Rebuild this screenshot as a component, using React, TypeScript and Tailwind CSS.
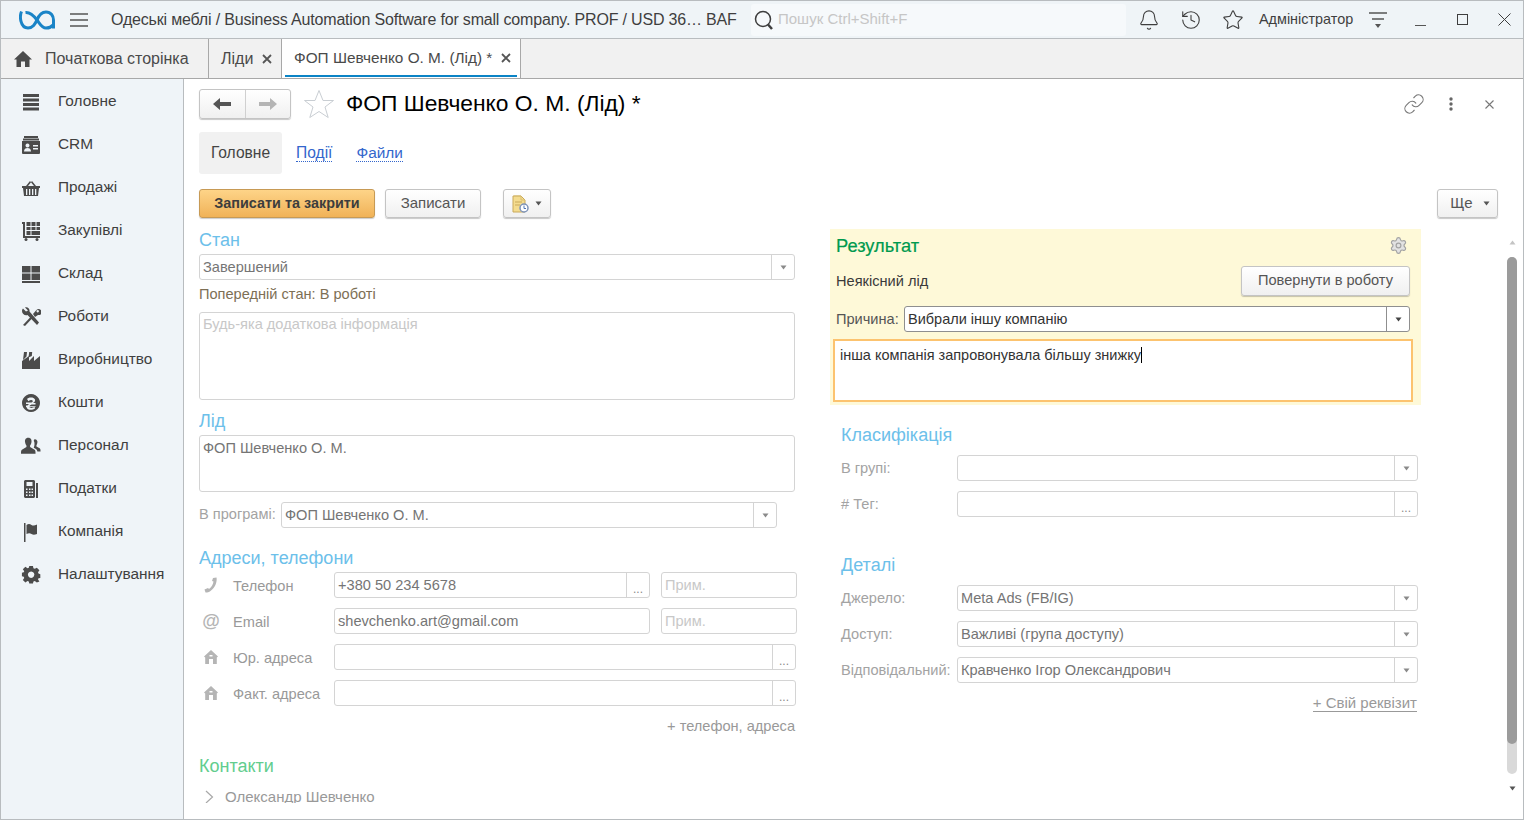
import React from "react";
import { Bell, History, Star, Link as LinkIcon, Settings } from "lucide-react";

const Caret = ({ c = "#8a8a8a" }: { c?: string }) => (
  <svg width="7" height="5" viewBox="0 0 7 5"><path d="M0.5 0.5h6L3.5 4.5z" fill={c} /></svg>
);

const Field = ({ w, h = "h-[26px]", value, btn, dark, ph, lead = "leading-[24px]" }: { w: string; h?: string; value?: string; btn?: "caret" | "dots"; dark?: boolean; ph?: boolean; lead?: string }) => (
  <div className={`${w} ${h} flex shrink-0 bg-white rounded-[3px] border ${dark ? "border-[#8f8f8f]" : "border-[#d4d4d4]"}`}>
    <div className={`flex-1 min-w-0 px-[3px] ${lead} truncate ${ph ? "text-[#c8c8c8]" : dark ? "text-[#333333] text-[14.5px]" : "text-[#757575]"}`}>{value}</div>
    {btn && (
      <div className={`w-[23px] flex shrink-0 border-l ${dark ? "border-[#8f8f8f]" : "border-[#d4d4d4]"} justify-center ${btn === "caret" ? "items-center" : "items-end pb-[1px]"}`}>
        {btn === "caret" ? <Caret c={dark ? "#444444" : "#8a8a8a"} /> : <span className="text-[#8a8a8a] text-[12px] leading-[14px]">...</span>}
      </div>
    )}
  </div>
);

const Heading = ({ children, className = "" }: { children: React.ReactNode; className?: string }) => (
  <div className={`h-[22px] leading-[22px] text-[18px] text-[#6cc0ea] ${className}`}>{children}</div>
);

const I = ({ children, vb = "0 0 20 20" }: { children: React.ReactNode; vb?: string }) => (
  <svg width="20" height="20" viewBox={vb} fill="#4b4b4b">{children}</svg>
);

const navItems: [string, React.ReactNode][] = [
  ["Головне", <I><path d="M2 2h16v3H2zM2 6.500h16v3H2zM2 11h16v3H2zM2 15.500h16v3H2z" /></I>],
  ["CRM", <I><path d="M3 1h14v2H3zM2 3.500h16v2H2z" /><path fillRule="evenodd" d="M1 6h18v12a1 1 0 0 1-1 1H2a1 1 0 0 1-1-1zM6.500 8.500a2 2 0 1 0 .01 0zM3 16.500h7c0-2.500-1.500-3.500-3.500-3.500S3 14 3 16.500zM12 10v1.500h5V10zM12 13v1.500h5V13z" /></I>],
  ["Продажі", <I><path d="M5 8 9 3h2L7 8zM15 8l-4-5H9l4 5z" /><path fillRule="evenodd" d="M1 8h18v2h-1l-1 8H3L2 10H1zM5 11v6h1.300v-6zM8 11v6h1.300v-6zM11 11v6h1.300v-6zM14 11v6h1.300v-6z" /></I>],
  ["Закупівлі", <I><path d="M1 1h3v14h15v2H2V3H1zM5.500 1h4v4h-4zM10.500 1h4v4h-4zM15.500 1h3.500v4h-3.500zM5.500 6h4v3h-4zM10.500 6h4v3h-4zM15.500 6h3.500v3h-3.500zM5.500 10h4v4h-4zM10.500 10h8.500v4h-8.500z" /><circle cx="5" cy="18.500" r="1.500" /><circle cx="16" cy="18.500" r="1.500" /></I>],
  ["Склад", <I><path d="M1 2h8.500v6.500H1zM10.500 2H19v6.500h-8.500zM1 9.500h8.500V16H1zM10.500 9.500H19V16h-8.500zM1 17h18v2H1z" /></I>],
  ["Роботи", <I><path d="M1 4c0-1 .5-2 1-2.500L5 4.500l2-1-3-3c2.500-.8 5 1 4.500 4L18 15.500 16 18 6.500 8C4 9 1 7 1 4z" /><path fillRule="evenodd" d="M2 18l7.500-8 1.500 1.500L4 19zM12 7l3-3.500a3 3 0 1 1 2 4.500L14 10z M16.700 3a1.200 1.200 0 1 0 .01 0z" /></I>],
  ["Виробництво", <I><path d="M2 10 3 2h3l-.5 4.500zM7.500 7.500 8.200 2h3L10.800 6 zM1 19V11l7-5v5l5-5v5l6-5v13z" /></I>],
  ["Кошти", <I><path fillRule="evenodd" d="M10 1a9 9 0 1 0 .01 0zM6 6c1-2 7-2.500 8 .5.500 2-1 3-2 3.500h2.500v1.500H10.500c-1 .5-2 1-2 1.700h6V14H8.500c.500 1.500 3.500 1 5-.200l.5 1.700c-2.500 2-8 2-8.500-1.500H5v-1.500h1.500c.4-.8 1.200-1.200 2-1.500H5v-1.500h5.500c1-.5 1.500-1 1.200-1.800-.5-1-3-.8-4.200.500z" /></I>],
  ["Персонал", <I vb="0 0 22 20"><path d="M8 1c3 0 4 2.500 3.500 5-.2 1.500-1 3-1.500 3.500v1.500l5 3c.8.500 1 1.500 1 4.500H0c0-3 .2-4 1-4.500l5-3V9.500C5.500 9 4.700 7.500 4.500 6 4 3.500 5 1 8 1z" /><path d="M15 2.500c2.500 0 3.500 2 3 4-.2 1.200-.7 2.200-1 2.700v1.300l3.500 2c.8.500 1 1.500 1 3.500H18c-.3-1.500-1-2.500-2-3l-2-1.200c1-2 1.300-5.500 0-7.500.2-.6.500-1.800 1-1.800z" /></I>],
  ["Податки", <I><path fillRule="evenodd" d="M4 1h9l1 1v16l-1 1H4l-1-1V2zM5.500 3v4h6V3zM5 9.500v1.500h1.500V9.500zM8 9.500v1.500h1.500V9.500zM10.500 9.500v1.500H12V9.500zM5 12.500V14h1.500v-1.500zM8 12.500V14h1.500v-1.500zM10.500 12.500V14H12v-1.500zM5 15.500V17h1.500v-1.500zM8 15.500V17h1.500v-1.500zM10.500 15.500V17H12v-1.500z" /><path d="M15 4h2v15h-2z" /></I>],
  ["Компанія", <I><path d="M3 1h1.500v19H3zM5.500 3c2-1.500 3.500-1 5 0s3 .5 5.500-.5V12c-2.500 1-4 1-5.500 0s-3-1-5 0z" /></I>],
  ["Налаштування", <I><path fillRule="evenodd" d="M8 1h4l.5 2.500 1.500.700L16.200 3 19 5.800 17.500 8l.5 1.200 2 .8v4l-2 .5-.5 1.200L19 17.800 16.200 19 14 17.500l-1.500.5L12 20H8l-.5-2L6 17.500 3.800 19 1 16.200 2.500 14 2 12.800 0 12.300V8.500l2-.5.5-1.300L1 4.500 3.800 2 6 3.500 7.500 3zM10 7a3.500 3.500 0 1 0 .01 0z" transform="scale(.92) translate(1 0)" /></I>],
];

const SmallHouse = () => (
  <svg width="16" height="16" viewBox="0 0 16 16" fill="#b5b5b5"><path fillRule="evenodd" d="M8 1 15 7.500 13.800 8.500V15H10V10H6v5H2.200V8.500L1 7.500zM6.500 6v1.500h3V6z" /></svg>
);

function AddressRow({ icon, label, children }: { icon: React.ReactNode; label: string; children: React.ReactNode }) {
  return (
    <div className="flex items-center h-[26px] gap-[11px]">
      <div className="w-[135px] flex items-center shrink-0 text-[#999999] -mr-[11px]">
        <div className="w-[24px] flex justify-center shrink-0">{icon}</div>
        <span className="ml-[10px] pt-[4px]">{label}</span>
      </div>
      {children}
    </div>
  );
}

function RightRow({ label, children }: { label: string; children: React.ReactNode }) {
  return (
    <div className="flex items-center h-[26px] pl-[11px]">
      <span className="w-[116px] shrink-0 text-[#a3a3a3] pt-[2px]">{label}</span>
      {children}
    </div>
  );
}

const btn = "rounded-[3px] border border-[#c4c4c4] bg-gradient-to-b from-white to-[#f0f0f0] shadow-[0_1px_1px_rgba(0,0,0,0.22)] text-[#555555]";

export default function App() {
  return (
    <div className="w-[1524px] h-[820px] flex flex-col overflow-hidden border border-[#b8bcbf] bg-white text-[14.6px] text-[#333333] font-['Liberation_Sans',Arial,sans-serif]">
      <header className="h-[37px] shrink-0 flex items-center bg-[#eff4f7] border-b border-[#b8bcbf] box-content">
        <svg className="ml-[18px] shrink-0" width="36" height="20" viewBox="0 0 36 20" fill="none" stroke="#1a84c7" strokeWidth="3">
          <path d="M2.500 1.500C.5 6 1 18 9 18c5 0 7-4 9-8 2-5 5-8 9-8 5 0 7.500 4 7.500 8v8.500" />
          <path d="M6.500 2.500c5-.5 8.500 3.500 11.500 7.500s5 8 9 8c3 0 5.500-1 7-3" />
        </svg>
        <svg className="ml-[15px] shrink-0" width="18" height="14" viewBox="0 0 18 14" stroke="#555555" strokeWidth="1.600"><path d="M0 1h18M0 7h18M0 13h18" /></svg>
        <div className="ml-[23px] w-[627px] shrink-0 whitespace-nowrap text-[16px] text-[#3f3f3f] tracking-[-0.18px]">Одеські меблі / Business Automation Software for small company. PROF / USD 36… BAF</div>
        <div className="ml-[13px] w-[375px] h-[32px] shrink-0 flex items-center rounded-[3px] bg-[#f6f9fb] pl-[3px]">
          <svg width="20" height="20" viewBox="0 0 20 20" fill="none" stroke="#3e3e3e" strokeWidth="1.500"><circle cx="9" cy="9" r="7.500" /><path d="M14 14.500l4 4.500" strokeWidth="2.500" /></svg>
          <span className="ml-[4px] text-[#c6c6c6] text-[15px]">Пошук Ctrl+Shift+F</span>
        </div>
        <Bell className="ml-[12px] shrink-0" size={22} strokeWidth={1.200} color="#3e3e3e" />
        <History className="ml-[20px] shrink-0" size={22} strokeWidth={1.200} color="#3e3e3e" />
        <Star className="ml-[20px] shrink-0" size={22} strokeWidth={1.200} color="#3e3e3e" />
        <span className="ml-[15px] w-[94px] shrink-0 whitespace-nowrap text-[14.4px] text-[#3f3f3f]">Адміністратор</span>
        <svg className="ml-[16px] shrink-0" width="18" height="18" viewBox="0 0 18 18" stroke="#555555" strokeWidth="1.500" fill="#555555"><path d="M0 2h18M3 8h12" /><path d="M6 13h6l-3 4z" stroke="none" /></svg>
        <div className="ml-[28px] w-[11px] h-[12px] shrink-0 border-b border-[#555555]" />
        <div className="ml-[31px] w-[11px] h-[11px] shrink-0 border border-[#3e3e3e]" />
        <svg className="ml-[30px] shrink-0" width="13" height="13" viewBox="0 0 13 13" stroke="#3e3e3e" strokeWidth="1"><path d="M.5.500l12 12M12.500.500l-12 12" /></svg>
      </header>

      <div className="h-[39px] shrink-0 flex bg-[#f1f1f1] border-b border-[#a8a8a8] box-content">
        <div className="w-[208px] shrink-0 flex items-center border-r border-[#a8a8a8] pl-[12px]">
          <svg width="20" height="18" viewBox="0 0 20 18" fill="#4b4b4b"><path d="M10 1 19 9.500H16.500V17H12V11.500H8V17H3.500V9.500H1z" /></svg>
          <span className="ml-[12px] text-[#4a4a4a] whitespace-nowrap text-[16px]">Початкова сторінка</span>
        </div>
        <div className="w-[73px] shrink-0 flex items-center border-r border-[#a8a8a8] pl-[12px]">
          <span className="text-[#4a4a4a] text-[16px]">Ліди</span>
          <svg className="ml-[9px]" width="10" height="10" viewBox="0 0 10 10" stroke="#555555" strokeWidth="1.800"><path d="M1 1l8 8M9 1l-8 8" /></svg>
        </div>
        <div className="w-[239px] shrink-0 flex flex-col bg-white border-r border-[#a8a8a8] h-[39px]">
          <div className="flex-1 flex items-center pl-[12px] pt-[1px]">
            <span className="text-[#4a4a4a] text-[15.35px] whitespace-nowrap">ФОП Шевченко О. М. (Лід) *</span>
            <svg className="ml-[9px]" width="10" height="10" viewBox="0 0 10 10" stroke="#555555" strokeWidth="1.800"><path d="M1 1l8 8M9 1l-8 8" /></svg>
          </div>
          <div className="mx-[3px] mb-[1px] h-[2px] bg-[#0b84c6]" />
        </div>
      </div>

      <div className="flex-1 min-h-0 flex">
        <aside className="w-[182px] shrink-0 bg-[#eff4f8] border-r border-[#b8bcbf] box-content pt-[1px]">
          {navItems.map(([label, icon]) => (
            <div key={label} className="h-[43px] flex items-center pl-[19px]">
              <div className="w-[22px] flex justify-center shrink-0">{icon}</div>
              <span className="ml-[16px] pb-[2px] text-[#3f3f3f] text-[15.4px] whitespace-nowrap">{label}</span>
            </div>
          ))}
        </aside>

        <main className="relative flex-1 min-w-0 pl-[15px] overflow-hidden">
          <div className="pt-[10px] flex items-center h-[40px] box-border">
            <div className={`w-[92px] h-[30px] flex ${btn}`}>
              <div className="flex-1 flex items-center justify-center border-r border-[#d0d0d0]">
                <svg width="18" height="12" viewBox="0 0 18 12" fill="#555555"><path d="M0 6 7 0v4h11v4H7v4z" /></svg>
              </div>
              <div className="flex-1 flex items-center justify-center">
                <svg width="18" height="12" viewBox="0 0 18 12" fill="#b5b5b5"><path d="M18 6 11 0v4H0v4h11v4z" /></svg>
              </div>
            </div>
            <svg className="ml-[12px]" width="32" height="30" viewBox="0 0 32 30" fill="none" stroke="#c9ced3" strokeWidth="1"><path d="M16 1.500l4 10h10.500l-8.500 6.500 3.200 10.500L16 22.500l-9.200 6L10 18l-8.500-6.500H12z" /></svg>
            <span className="ml-[11px] pb-[2px] text-[22.8px] text-black whitespace-nowrap">ФОП Шевченко О. М. (Лід) *</span>
            <div className="ml-auto flex items-center mr-[29px]">
              <LinkIcon size={22} strokeWidth={1.200} color="#777777" />
              <svg className="ml-[24px]" width="4" height="14" viewBox="0 0 4 14" fill="#666666"><circle cx="2" cy="2" r="1.700" /><circle cx="2" cy="7" r="1.700" /><circle cx="2" cy="12" r="1.700" /></svg>
              <svg className="ml-[32px]" width="9" height="9" viewBox="0 0 9 9" stroke="#777777" strokeWidth="1.100"><path d="M.5.500l8 8M8.500.500l-8 8" /></svg>
            </div>
          </div>

          <div className="mt-[13px] h-[42px] flex items-center">
            <div className="w-[83px] h-[42px] rounded-[3px] bg-[#f1f1f1] flex items-center justify-center text-[#444444] text-[15.6px]">Головне</div>
            <span className="ml-[14px] text-[#3366cc] text-[15.6px] border-b border-dotted border-[#3366cc] leading-[16px]">Події</span>
            <span className="ml-[24px] text-[#3366cc] text-[15.4px] border-b border-dotted border-[#3366cc] leading-[16px]">Файли</span>
          </div>

          <div className="mt-[15px] h-[29px] flex items-center">
            <div className="w-[176px] h-[29px] rounded-[3px] border border-[#c79a55] bg-gradient-to-b from-[#fed488] to-[#f0b257] shadow-[0_1px_1px_rgba(0,0,0,0.2)] flex items-center justify-center font-bold text-[14.4px] text-[#3d3d3d]">Записати та закрити</div>
            <div className={`ml-[10px] w-[96px] h-[29px] flex items-center justify-center text-[15px] ${btn}`}>Записати</div>
            <div className={`ml-[22px] w-[48px] h-[29px] flex items-center justify-center gap-[6px] ${btn}`}>
              <svg width="17" height="18" viewBox="0 0 17 18"><path d="M1 1h8l4 4v12H1z" fill="#f4dc8f" stroke="#c9a95a" /><path d="M2 1h7v4h4" fill="none" stroke="#d9bf73" /><path d="M3 7h7M3 10h5" stroke="#c9a95a" /><circle cx="12" cy="13" r="4" fill="#fff" stroke="#7d93b8" strokeWidth="1.500" /><path d="M12 10.500v3h2" stroke="#4f76b5" fill="none" /></svg>
              <Caret c="#555555" />
            </div>
            <div className={`ml-auto mr-[25px] w-[61px] h-[29px] flex items-center justify-center gap-[10px] pl-[5px] text-[15px] ${btn}`}>Ще <Caret c="#555555" /></div>
          </div>

          <div className="mt-[11px] h-[574px] overflow-hidden flex">
            <div className="w-[598px] shrink-0">
              <Heading>Стан</Heading>
              <div className="mt-[3px]"><Field w="w-[596px]" value="Завершений" btn="caret" /></div>
              <div className="mt-[4px] h-[20px] leading-[20px] text-[#7d6f55]">Попередній стан: В роботі</div>
              <div className="mt-[8px]"><Field w="w-[596px]" h="h-[88px]" lead="leading-[22px]" value="Будь-яка додаткова інформація" ph /></div>
              <Heading className="mt-[10px]">Лід</Heading>
              <div className="mt-[3px]"><Field w="w-[596px]" h="h-[57px]" value="ФОП Шевченко О. М." /></div>
              <div className="mt-[10px] flex items-center h-[26px]">
                <span className="w-[82px] shrink-0 text-[#a3a3a3]">В програмі:</span>
                <Field w="w-[496px]" value="ФОП Шевченко О. М." btn="caret" />
              </div>
              <Heading className="mt-[19px]">Адреси, телефони</Heading>
              <div className="mt-[3px] flex flex-col gap-[10px]">
                <AddressRow label="Телефон" icon={<svg width="16" height="16" viewBox="0 0 16 16" fill="#b5b5b5"><path d="M10 1l3.500-.5c.8 4-1 10-6 13.500-1.500 1-3 1.500-5 1.500L1.500 12.500 5 11l1 1c2.500-1.500 4-4.500 4.500-7.500L9 4z" /></svg>}>
                  <Field w="w-[316px]" value="+380 50 234 5678" btn="dots" />
                  <Field w="w-[136px]" value="Прим." ph />
                </AddressRow>
                <AddressRow label="Email" icon={<span className="text-[#b5b5b5] text-[18px] font-bold leading-none">@</span>}>
                  <Field w="w-[316px]" value="shevchenko.art@gmail.com" />
                  <Field w="w-[136px]" value="Прим." ph />
                </AddressRow>
                <AddressRow label="Юр. адреса" icon={<SmallHouse />}>
                  <Field w="w-[462px]" btn="dots" />
                </AddressRow>
                <AddressRow label="Факт. адреса" icon={<SmallHouse />}>
                  <Field w="w-[462px]" btn="dots" />
                </AddressRow>
              </div>
              <div className="mt-[10px] h-[20px] leading-[20px] w-[596px] text-right text-[#999999]">+ телефон, адреса</div>
              <Heading className="mt-[19px] text-[#62cd8e]">Контакти</Heading>
              <div className="mt-[10px] h-[20px] flex items-center text-[#999999] text-[15px]">
                <svg className="ml-[6px]" width="9" height="14" viewBox="0 0 9 14" fill="none" stroke="#a8a8a8" strokeWidth="1.200"><path d="M1 1l6.500 6L1 13" /></svg>
                <span className="ml-[11px]">Олександр Шевченко</span>
              </div>
            </div>

            <div className="ml-[33px] w-[591px] shrink-0">
              <div className="w-[591px] h-[176px] bg-[#fef9d8] pl-[6px] pr-[11px] pt-[7px]">
                <div className="h-[20px] flex items-center justify-between">
                  <span className="text-[#009a4e] text-[18.3px] [-webkit-text-stroke:0.2px_#009a4e]">Результат</span>
                  <Settings className="mr-[2px] -mt-[2px]" size={19} strokeWidth={1.500} color="#a3a3a3" fill="#e2e2e2" />
                </div>
                <div className="mt-[10px] h-[30px] flex items-center justify-between">
                  <span className="text-[#3a3a3a] pt-[2px]">Неякісний лід</span>
                  <div className={`w-[169px] h-[30px] flex items-center justify-center ${btn}`}>Повернути в роботу</div>
                </div>
                <div className="mt-[10px] h-[26px] flex items-center">
                  <span className="w-[68px] shrink-0 text-[#555555] pt-[2px]">Причина:</span>
                  <Field w="w-[506px]" value="Вибрали іншу компанію" btn="caret" dark />
                </div>
                <div className="mt-[7px] -ml-[3px] w-[580px] h-[63px] bg-white border-2 border-[#fcc36f] px-[5px] text-[#333333] text-[14.5px] leading-[28px]">
                  інша компанія запровонувала більшу знижку<span className="inline-block w-px h-[16px] bg-black align-[-3px]" />
                </div>
              </div>

              <Heading className="mt-[19px] pl-[11px]">Класифікація</Heading>
              <div className="mt-[9px] flex flex-col gap-[10px]">
                <RightRow label="В групі:"><Field w="w-[461px]" btn="caret" /></RightRow>
                <RightRow label="# Тег:"><Field w="w-[461px]" btn="dots" /></RightRow>
              </div>
              <Heading className="mt-[37px] pl-[11px]">Деталі</Heading>
              <div className="mt-[9px] flex flex-col gap-[10px]">
                <RightRow label="Джерело:"><Field w="w-[461px]" value="Meta Ads (FB/IG)" btn="caret" /></RightRow>
                <RightRow label="Доступ:"><Field w="w-[461px]" value="Важливі (група доступу)" btn="caret" /></RightRow>
                <RightRow label="Відповідальний:"><Field w="w-[461px]" value="Кравченко Ігор Олександрович" btn="caret" /></RightRow>
              </div>
              <div className="mt-[12px] flex justify-end pr-[4px]">
                <span className="text-[#999999] text-[15px] border-b border-[#999999] leading-[16px]">+ Свій реквізит</span>
              </div>
            </div>
          </div>

          <div className="absolute left-[1323px] top-[161px] w-[10px] h-[10px] flex justify-center"><svg width="7" height="5" viewBox="0 0 7 5"><path d="M3.500.5l3 4h-6z" fill="#c4c4c4" /></svg></div>
          <div className="absolute left-[1323px] top-[178px] w-[10px] h-[517px] rounded-[5px] bg-[#d9d9d9]">
            <div className="h-[487px] rounded-[5px] bg-[#9b9b9b]" />
          </div>
          <div className="absolute left-[1323px] top-[707px] w-[10px] flex justify-center"><Caret c="#555555" /></div>
        </main>
      </div>
    </div>
  );
}
